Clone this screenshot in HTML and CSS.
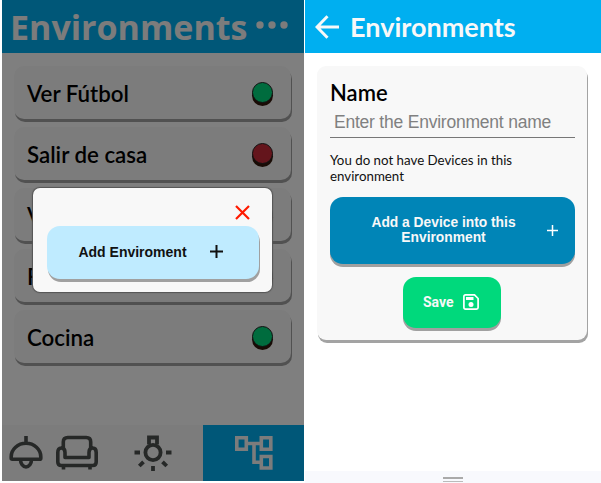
FILE: index.html
```html
<!DOCTYPE html>
<html lang="en">
<head>
<meta charset="utf-8">
<title>Environments</title>
<link rel="stylesheet" href="styles.css">
</head>
<body>
<main class="screens">
  <section class="phone phone-list">
    <header class="bar bar-list">
      <h1>Environments</h1>
      <svg class="dots" viewBox="0 0 32 8" width="32" height="8"><circle cx="4" cy="4" r="3.7"/><circle cx="16" cy="4" r="3.7"/><circle cx="28" cy="4" r="3.7"/></svg>
    </header>
    <div class="list">
      <article class="row"><span>Ver Fútbol</span><i class="light on"></i></article>
      <article class="row"><span>Salir de casa</span><i class="light off"></i></article>
      <article class="row"><span>V</span><i class="light on"></i></article>
      <article class="row"><span>F</span><i class="light on"></i></article>
      <article class="row"><span>Cocina</span><i class="light on"></i></article>
    </div>
    <nav class="tabs">
      <div class="tab tab-rooms">
        <svg width="34" height="36" viewBox="0 0 34 36" fill="none" stroke="#4c504f" stroke-width="3.6" stroke-linejoin="round"><path d="M17 1v8M2.200 23.200v-1.500a14.800 13.400 0 0 1 29.600 0v1.500q0 1-1 1H3.200q-1 0-1-1zM11.500 24.500a5.500 7.500 0 0 0 11 0"/></svg>
        <svg width="42" height="36" viewBox="0 0 42 36" fill="none" stroke="#4c504f" stroke-width="3.6" stroke-linejoin="round"><path d="M7.300 13V7q0-4.500 4.500-4.500h18.400q4.500 0 4.500 4.500v6M9 22.500h24v-5q0-4.500 3.700-4.500 3.500 0 3.500 4.500v9.500q0 3.500-3.500 3.500H5.300q-3.500 0-3.500-3.500v-9.500Q1.800 13 5.300 13 9 13 9 17.500zM7.500 31v3.500M34 31v3.500"/></svg>
      </div>
      <div class="tab tab-lights">
        <svg width="40" height="38" viewBox="0 0 40 38" fill="none" stroke="#4c504f" stroke-width="3.8"><path d="M16 10.500V3.500h8v7M1.500 18.500h5.500M33 18.500h5.500M10.500 27.800l-4.200 4.200M29.500 27.800l4.200 4.200M20 32v5"/><circle cx="20" cy="18.500" r="7.600"/></svg>
      </div>
      <div class="tab tab-active">
        <svg width="38" height="34" viewBox="0 0 38 34" fill="none" stroke="#f8f8f8" stroke-width="3.6"><path d="M1.800 1.800h9.500v11.400H1.800zM26.300 1.800h9.500v11.400h-9.500zM26.300 20.500h9.500v11.500h-9.500zM11.500 7.500h15M19 7.500v18.700h7.500"/></svg>
      </div>
    </nav>
    <div class="overlay">
      <div class="dialog">
        <svg class="close" width="15" height="15" viewBox="0 0 15 15"><path d="M1 1l13 13M14 1L1 14"/></svg>
        <button class="add-env"><span>Add Enviroment</span><svg width="13" height="13" viewBox="0 0 13 13"><path d="M6.500 0v13M0 6.500h13"/></svg></button>
      </div>
    </div>
  </section>

  <section class="phone phone-form">
    <header class="bar bar-form">
      <svg class="back" width="24" height="24" viewBox="0 0 24 24"><path d="M24 12H2M12.500 1.300L2 12l10.500 10.700"/></svg>
      <h1>Environments</h1>
    </header>
    <form class="card">
      <label for="name">Name</label>
      <input id="name" placeholder="Enter the Environment name">
      <p>You do not have Devices in this environment</p>
      <button type="button" class="add-device"><span>Add a Device into this Environment</span><svg width="11" height="11" viewBox="0 0 11 11"><path d="M5.500 0v11M0 5.500h11"/></svg></button>
      <button type="button" class="save"><span>Save</span><svg width="16" height="16" viewBox="0 0 16 16"><path d="M2.500.9h9L15.100 4.500v9q0 1.600-1.600 1.600h-11Q.9 15.100.9 13.500v-11Q.9.9 2.500.9z" fill="none" stroke="#fff" stroke-width="1.700"/><path d="M3 3h7.500v3H3z" fill="#fff"/><circle cx="8" cy="10.500" r="2.500" fill="#fff"/></svg></button>
    </form>
    <footer class="grip"><i></i></footer>
  </section>
</main>
</body>
</html>
```
FILE: styles.css
```css
* { box-sizing: border-box; }
body { margin: 0; background: #fff; overflow: hidden; font-family: Lato, sans-serif; }
h1, p { margin: 0; }
svg { display: block; flex: none; }
button { border: 0; font-family: "Liberation Sans", Arial, sans-serif; font-weight: 700; }

.screens { display: flex; gap: 1px; height: 483px; padding-left: 2px; }
.phone { display: flex; flex-direction: column; }
.phone-list { position: relative; width: 302px; height: 481px; background: #fff; }
.phone-form { width: 296px; height: 483px; }

.bar { display: flex; align-items: center; flex: none; height: 53px; background: #00aff0; color: #f8f8f8; }
.bar-list { padding-left: 8px; }
.bar-list h1 { width: 238px; font: 700 34px/50px "Open Sans", sans-serif; white-space: nowrap; }
.dots { margin-left: 8px; margin-bottom: 3px; fill: #f8f8f8; }
.bar-form { padding-left: 10px; gap: 11px; }
.bar-form h1 { font-size: 27px; line-height: 52px; }
.back { fill: none; stroke: #f8f8f8; stroke-width: 3; }

.list { display: flex; flex-direction: column; gap: 8px; flex: 1; padding: 13px 13px 0 12px; }
.row { display: flex; align-items: center; justify-content: space-between; height: 53px; padding: 1px 18px 0 13px; border-radius: 10px; background: #f8f8f8; box-shadow: 1px 3px 0 #a3a3a3; color: #000; font-size: 22.300px; font-weight: 600; }
.light { width: 21px; height: 21px; margin-top: -1px; border: 1px solid #222; border-radius: 50%; box-shadow: 0 3px 0 #32170a; }
.on { background: #00d97c; }
.off { background: #c92b38; }

.tabs { display: flex; height: 56px; background: #f8f8f8; }
.tab { display: flex; align-items: center; justify-content: center; }
.tab-rooms { width: 101px; justify-content: flex-start; gap: 13px; padding-left: 7px; }
.tab-lights { width: 100px; padding-right: 1px; }
.tab-active { width: 101px; background: #00aff0; }

.overlay { position: absolute; inset: 0; display: flex; align-items: flex-start; padding: 188px 0 0 31px; background: rgba(0, 0, 0, .5); }
.dialog { display: flex; flex-direction: column; width: 239px; height: 104px; padding: 17px 13px 0 14px; border-radius: 7px; background: #f8f8f8; box-shadow: 0 0 1px 1px #555; }
.close { align-self: flex-end; margin-right: 9px; stroke: #ff1a00; stroke-width: 2.200; }
.add-env { display: flex; align-items: center; justify-content: center; gap: 23px; width: 212px; height: 53px; margin-top: 6px; padding: 0 5px 2px 0; border-radius: 13px; background: #bfebff; box-shadow: 1px 3px 0 #a0a0a0; color: #111; font-size: 14px; }
.add-env svg { stroke: #111; stroke-width: 2; }

.card { display: flex; flex-direction: column; width: 270px; height: 274px; margin: 13px 0 0 12px; padding: 13px 12px 0 13px; border-radius: 9px; background: #f8f8f8; box-shadow: 1px 3px 0 #a3a3a3; }
.card label { font-size: 22px; line-height: 27px; font-weight: 600; color: #000; }
.card input { width: 245px; height: 32px; padding: 2px 4px 0; border: 0; border-bottom: 1px solid #777; background: none; outline: 0; font: 17.500px "Liberation Sans", Arial, sans-serif; letter-spacing: -.22px; }
.card input::placeholder { color: #808080; }
.card p { margin-top: 14px; font-size: 13.300px; line-height: 16px; color: #111; }
.card button { display: flex; align-items: center; color: #f8f8f8; box-shadow: 0 3px 0 #a0a0a0; }
.add-device { flex: none; width: 245px; height: 67px; margin-top: 13px; padding: 0 17px 0 30px; border-radius: 13px; background: #0085b7; font-size: 13.800px; line-height: 15px; }
.add-device span { flex: 1; padding: 0 20px 2px 0; text-align: center; }
.add-device svg { stroke: #fff; stroke-width: 1.500; }
.card .save { align-self: center; flex: none; gap: 9px; width: 98px; height: 51px; margin: 13px 1px 0 0; padding: 0 0 2px 20px; border-radius: 13px; background: #00d97c; font-family: Roboto, sans-serif; font-size: 14px; }

.grip { display: flex; justify-content: center; height: 12px; margin-top: auto; padding-top: 6px; background: #f8f9fd; }
.grip i { width: 20px; height: 5px; border-top: 2px solid #aaa; border-bottom: 1px solid #bbb; }
```
